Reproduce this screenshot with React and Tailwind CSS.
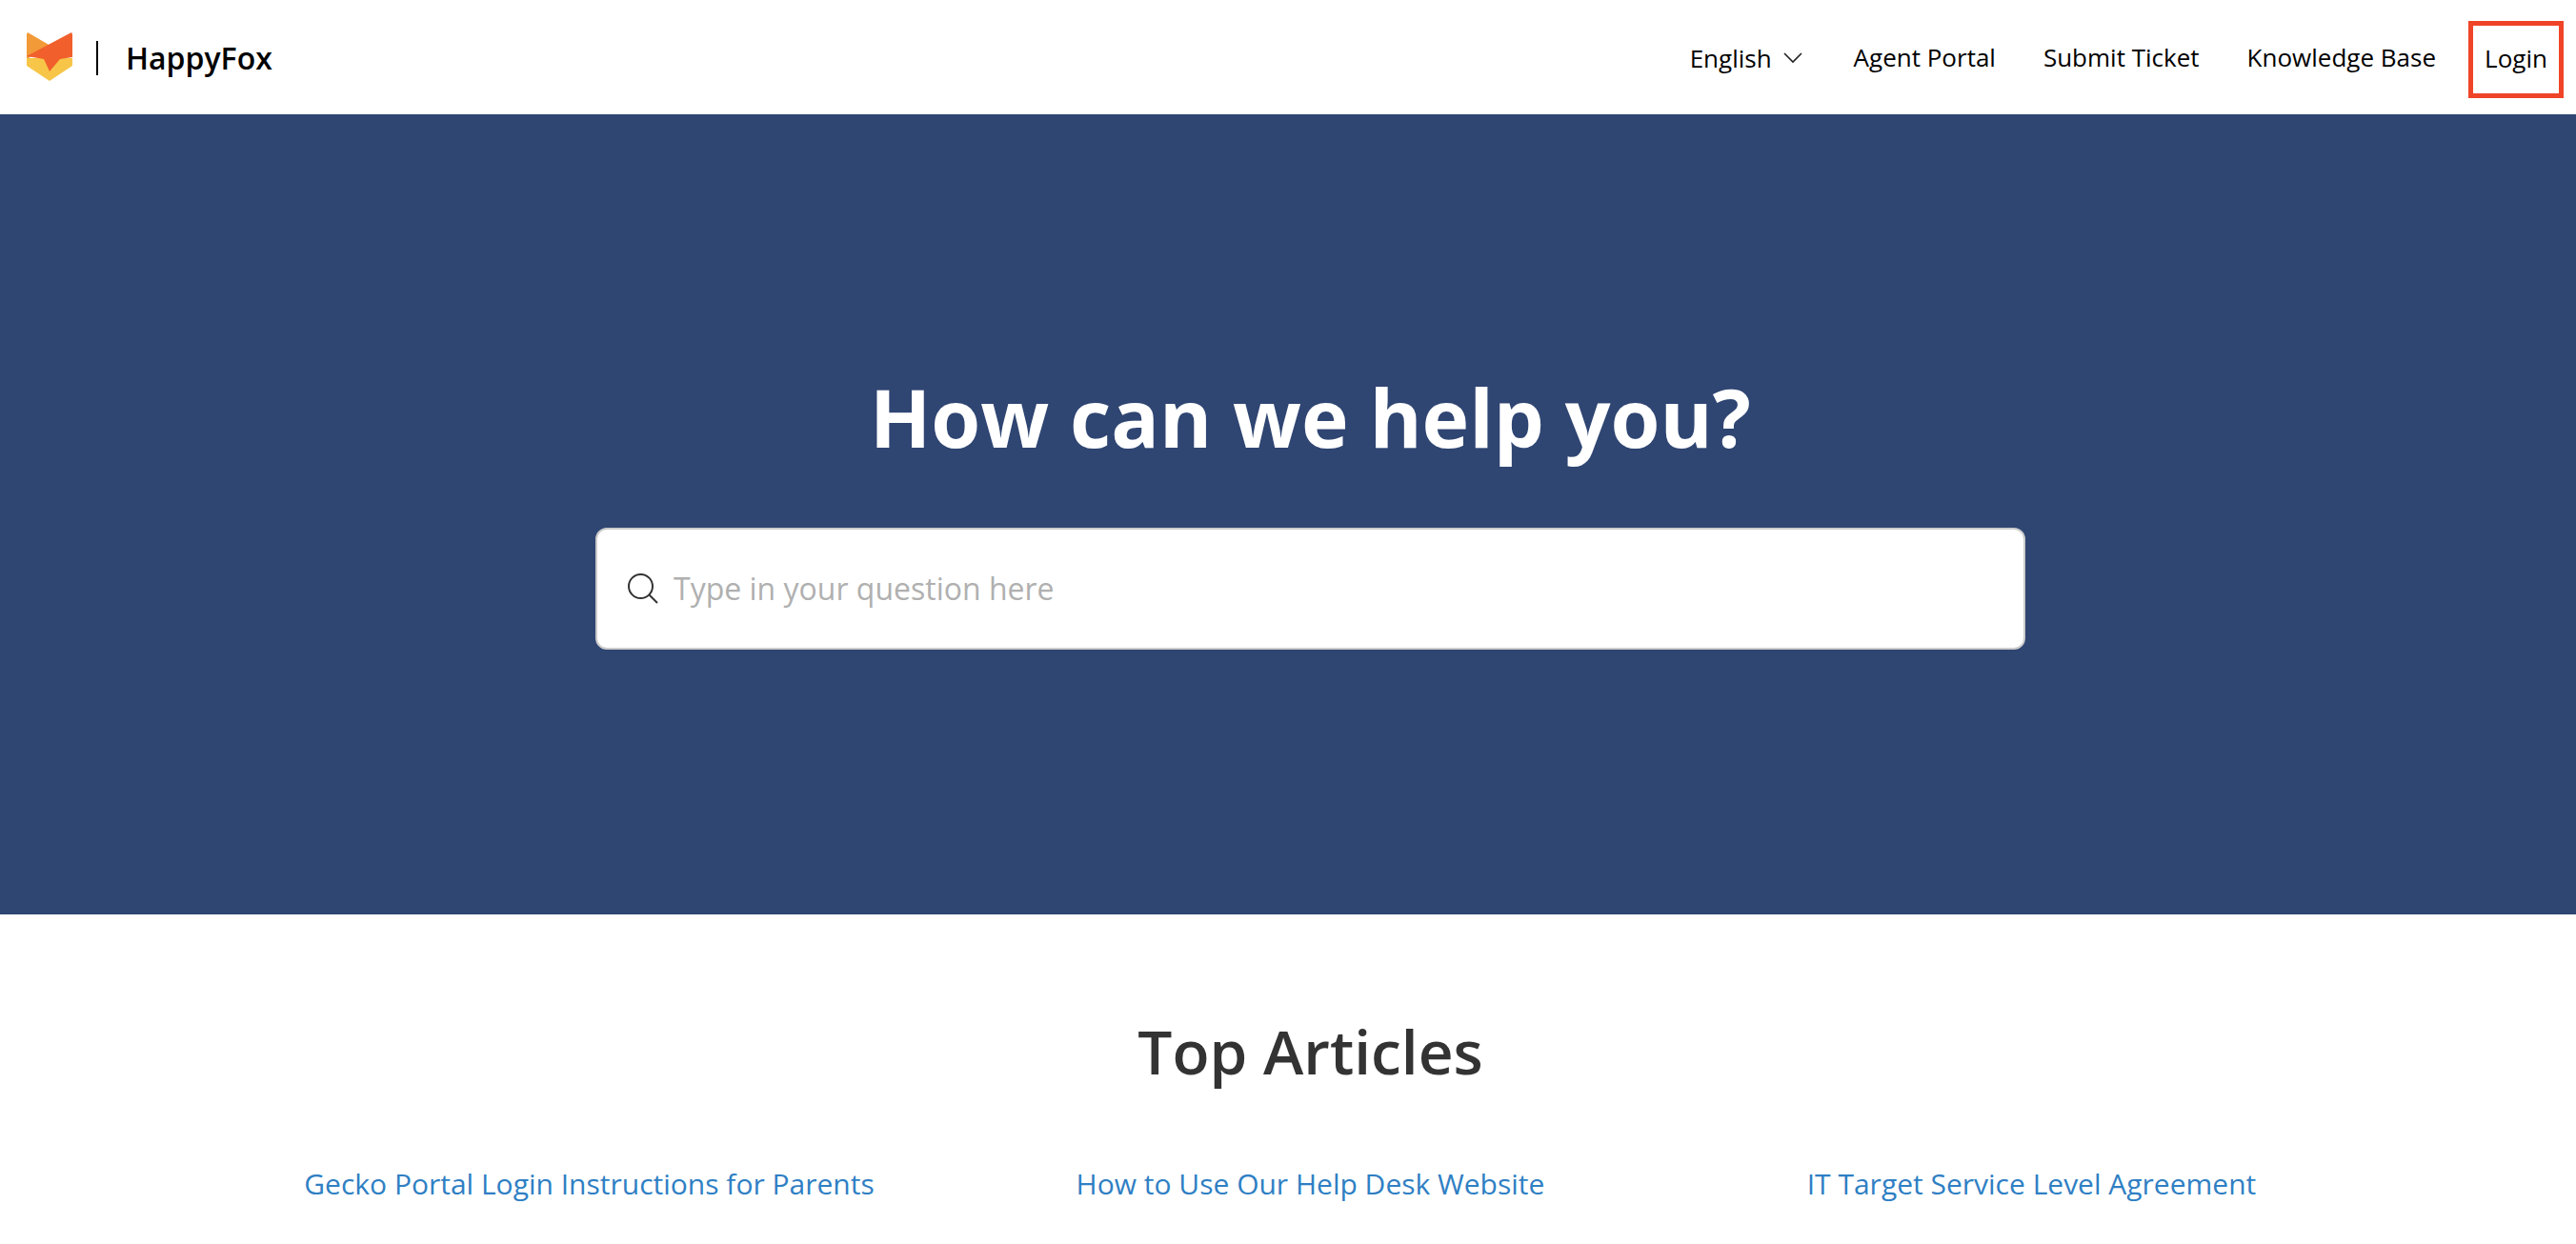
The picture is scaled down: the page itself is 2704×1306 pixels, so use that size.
const font = { fontFamily: '"Open Sans", sans-serif' };

function FoxLogo() {
  return (
    <svg width="48" height="52" viewBox="0 0 48 52" className="shrink-0">
      <path d="M0 27 L48 27 L48 35 L24 51 L0 35 Z" fill="#f7c548" />
      <path d="M1 0 L25 14 L2 27 L0 27 L0 2 Z" fill="#f29a38" />
      <path d="M47 0 L48 2 L48 26 L35 28 L24 41 L18 28 L0 25 L47 0 Z" fill="#f15f2c" />
    </svg>
  );
}

export default function App() {
  const articles = [
    'Gecko Portal Login Instructions for Parents',
    'How to Use Our Help Desk Website',
    'IT Target Service Level Agreement',
  ];

  return (
    <div className="min-h-screen bg-white overflow-hidden" style={font}>
      <header className="h-[120px] flex items-center justify-between pl-7 pr-[13px]">
        <div className="flex items-center">
          <FoxLogo />
          <div className="w-[2px] h-9 bg-black ml-[25px] mr-[29px] mt-[2px]"></div>
          <span className="text-[32px] font-semibold text-black mt-[2px]">HappyFox</span>
        </div>
        <nav className="flex items-center text-[26px] text-black">
          <div className="flex items-center gap-3 mr-[54px] mt-[2px]">
            <span>English</span>
            <svg width="20" height="12" viewBox="0 0 20 12" fill="none" stroke="#222" strokeWidth="1.6">
              <path d="M1 1 L10 10 L19 1" />
            </svg>
          </div>
          <span className="mr-[50px]">Agent Portal</span>
          <span className="mr-[50px]">Submit Ticket</span>
          <span className="mr-[34px]">Knowledge Base</span>
          <div className="w-[100px] h-[81px] mt-[5px] pb-[3px] border-[5px] border-[#ef4427] flex items-center justify-center">
            Login
          </div>
        </nav>
      </header>

      <section className="h-[840px] bg-[#2f4572] flex flex-col items-center pl-[47px] pt-[261px]">
        <h1 className="text-[84px] leading-[114px] font-bold text-white">How can we help you?</h1>
        <div className="w-[1501px] h-[128px] mt-[59px] bg-white rounded-[12px] border-2 border-[#cccccc] flex items-center pl-[31px]">
          <svg width="34" height="34" viewBox="0 0 34 34" fill="none" stroke="#333" strokeWidth="2">
            <circle cx="14.5" cy="14.5" r="12.5" />
            <path d="M23.5 23.5 L32 32" />
          </svg>
          <span className="ml-[15px] text-[32px] text-[#b0b0b0]">Type in your question here</span>
        </div>
      </section>

      <section className="pl-[47px] pt-[100px] flex flex-col items-center">
        <h2 className="text-[64px] leading-[88px] font-semibold text-[#333333]">Top Articles</h2>
        <div className="w-[2271px] grid grid-cols-3 mt-[73px]">
          {articles.map((title) => (
            <a key={title} className="text-center text-[30px] leading-[44px] text-[#2f7fc4]">
              {title}
            </a>
          ))}
        </div>
      </section>
    </div>
  );
}
